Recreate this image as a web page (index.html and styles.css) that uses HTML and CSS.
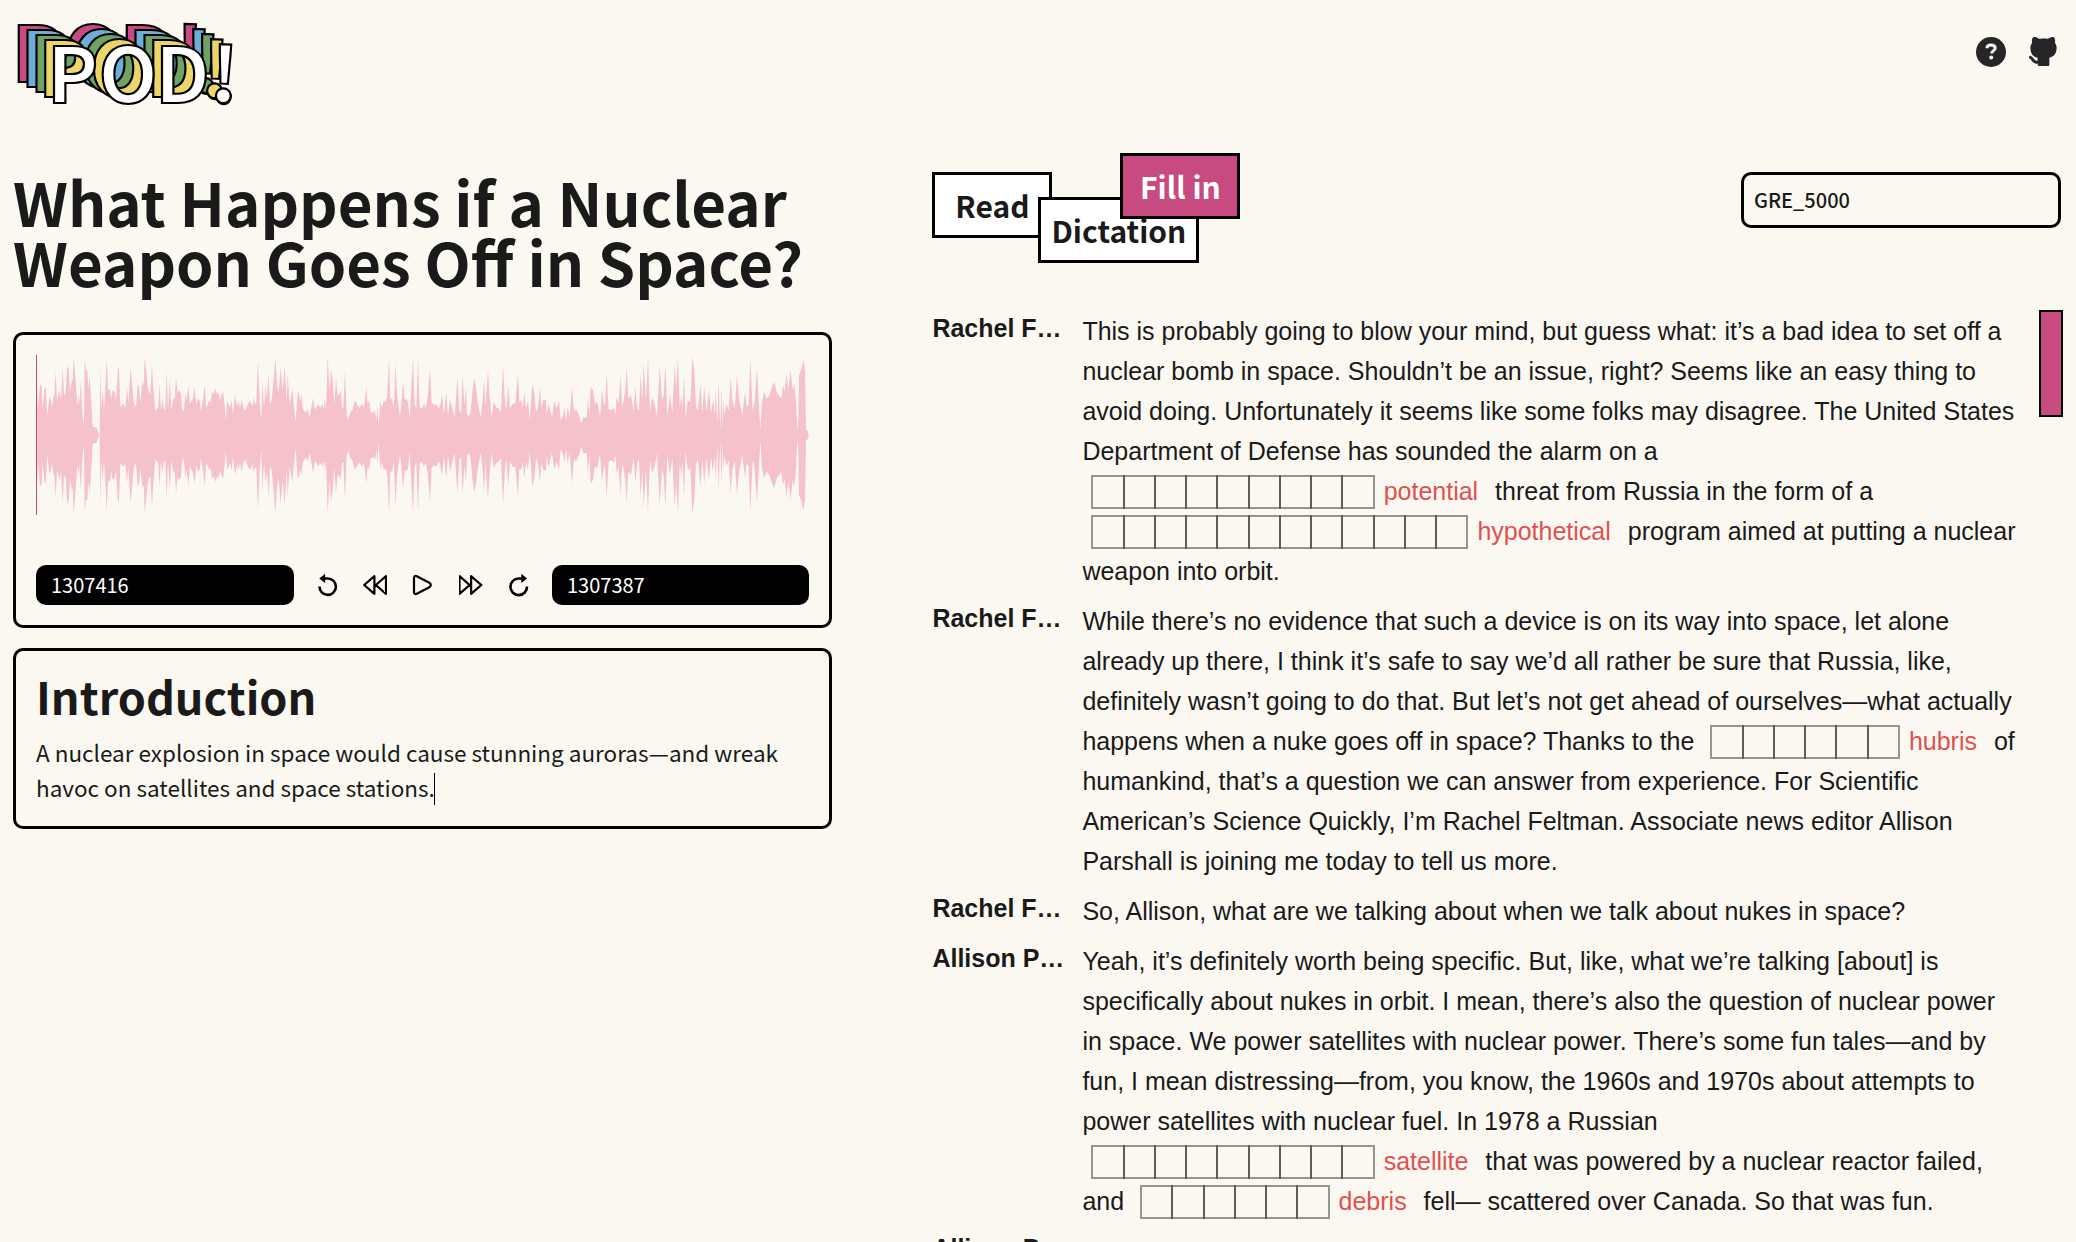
FILE: index.html
```html
<!DOCTYPE html>
<html lang="en">
<head>
<meta charset="utf-8">
<title>POD!</title>
<link rel="stylesheet" href="styles.css">
</head>
<body>
<header class="topbar">
  <svg class="logo" width="240" height="110" viewBox="0 0 240 110" aria-label="POD!">
    <defs>
      <g id="word">
        <text x="47" y="102.5">P</text>
        <text x="98.500" y="102.5">O</text>
        <text x="155" y="102.5">D</text>
        <text x="210" y="103" transform="rotate(2 223 80)">!</text>
        <circle cx="223.300" cy="95.800" r="7.400"/>
      </g>
    </defs>
    <use href="#word" x="-35.2" y="-20.4" fill="#c74a80"/>
    <use href="#word" x="-26.4" y="-15.3" fill="#6caed6"/>
    <use href="#word" x="-17.6" y="-10.2" fill="#6fa264"/>
    <use href="#word" x="-8.8" y="-5.1" fill="#ecd66a"/>
    <use href="#word" fill="#fff"/>
  </svg>
  <nav class="links">
    <svg width="30" height="30" viewBox="0 0 30 30"><circle cx="15" cy="15" r="15" fill="#262628"/><path d="M10.9 11.2c0-2 1.6-3.2 4-3.2s4.300 1.200 4.300 3.200c0 2.500-3.600 2.500-3.600 5.400" fill="none" stroke="#fbf8f1" stroke-width="2.900"/><circle cx="15.200" cy="20.600" r="2" fill="#fbf8f1"/></svg>
    <svg width="35" height="35" viewBox="0 0 24 24" fill="#262628"><path d="M5.315 2.1c.791 -.113 1.9 .145 3.333 .966l.272 .161l.16 .1l.397 -.083a13.3 13.3 0 0 1 4.59 -.08l.456 .08l.396 .083l.161 -.1c1.385 -.84 2.487 -1.17 3.322 -1.148l.164 .008l.147 .017l.076 .014l.05 .011l.144 .047a1 1 0 0 1 .53 .514a5.2 5.2 0 0 1 .397 2.91l-.047 .267l-.046 .196l.123 .163c.574 .795 .93 1.728 1.03 2.707l.023 .295l.007 .272c0 3.855 -1.659 5.883 -4.644 6.68l-.245 .061l-.132 .029l.014 .161l.008 .157l.004 .365l-.002 .213l-.003 3.834a1 1 0 0 1 -.883 .993l-.117 .007h-6a1 1 0 0 1 -.993 -.883l-.007 -.117v-.734c-1.818 .26 -3.03 -.424 -4.11 -1.878l-.535 -.766c-.28 -.396 -.455 -.579 -.589 -.644l-.048 -.019a1 1 0 0 1 .564 -1.918c.642 .188 1.074 .568 1.57 1.239l.538 .769c.76 1.079 1.36 1.459 2.609 1.191l.001 -.678l-.018 -.168a5.03 5.03 0 0 1 -.021 -.824l.017 -.185l.019 -.12l-.108 -.024c-2.976 -.71 -4.703 -2.573 -4.875 -6.139l-.01 -.31l-.004 -.292a5.6 5.6 0 0 1 .908 -3.051l.152 -.222l.122 -.163l-.045 -.196a5.2 5.2 0 0 1 .145 -2.642l.1 -.282l.106 -.253a1 1 0 0 1 .529 -.514l.144 -.047l.154 -.03z"/></svg>
  </nav>
</header>
<main class="layout">
  <section class="left">
    <h1>What Happens if a Nuclear Weapon Goes Off in Space?</h1>
    <div class="panel player">
      <svg class="wave" width="773" height="160" viewBox="108 104 2319 480">
        <defs><g id="half">
          <path d="M110 345L112 200 114 265 120 190 125 200 128 265 133 205 137 200 142 285 148 230 153 240 156 260 160 230 163 225 167 155 171 240 178 210 183 235 188 140 192 225 197 215 202 135 206 150 210 215 215 185 218 180 221 110 226 165 232 255 237 220 238 260 242 180 246 260 250 310 252 300 254 115 258 150 262 150 265 205 269 170 273 230 278 318 282 320 290 322 297 344 299 344 301 135 304 265 308 210 312 265 316 205 320 115 324 210 330 205 334 235 338 210 344 215 348 240 354 140 357 150 361 260 371 250 376 262 381 200 385 250 392 140 397 200 402 250 408 260 413 190 417 200 421 245 427 185 431 195 434 110 438 145 443 200 447 215 451 220 456 130 460 200 466 272 475 262 478 190 483 270 487 230 491 262 496 270 500 150 504 265 509 180 514 268 520 235 524 235 528 170 533 220 537 208 543 220 547 275 552 268 556 220 560 240 565 195 570 250 578 235 584 200 589 252 594 235 599 240 603 275 609 235 614 195 619 262 628 240 632 248 636 212 641 222 646 205 652 222 655 215 659 238 665 225 669 212 673 245 677 298 682 240 690 262 694 238 699 280 705 225 712 258 716 240 720 262 725 235 730 262 736 272 742 255 750 240 757 258 761 230 764 250 769 245 774 120 779 240 784 298 787 180 792 260 797 200 801 235 806 160 810 250 815 240 820 185 826 110 831 190 836 215 842 140 848 210 854 135 860 245 863 160 869 250 877 205 882 260 887 305 893 215 897 220 901 245 904 220 909 265 918 278 923 265 929 292 939 232 945 268 955 252 961 262 966 250 971 265 975 240 978 270 983 110 989 210 993 145 998 180 1003 250 1008 170 1012 220 1017 225 1022 210 1026 260 1030 265 1035 150 1040 285 1045 298 1051 275 1057 270 1065 240 1073 255 1079 262 1086 250 1092 262 1099 200 1103 250 1107 240 1112 275 1121 278 1125 270 1129 300 1132 260 1136 320 1141 240 1145 262 1152 240 1157 245 1162 225 1167 110 1171 240 1176 232 1181 265 1187 130 1191 220 1200 290 1204 250 1209 185 1214 240 1218 235 1224 245 1229 295 1233 220 1239 110 1244 250 1249 265 1254 115 1259 260 1261 262V345Z"/>
          <path transform="translate(1260 0)" d="M0 345L0 262 6 265 12 250 17 262 23 230 30 145 35 245 42 255 48 250 55 265 60 258 66 225 72 280 79 215 84 285 90 235 97 265 104 290 112 172 118 270 123 280 128 165 133 255 138 200 141 280 146 290 152 275 158 205 163 175 168 200 174 250 182 290 187 250 192 175 196 260 204 150 209 230 215 290 221 245 230 262 236 265 243 275 249 135 254 230 259 270 265 195 270 265 278 250 286 250 294 160 298 245 304 240 308 265 313 215 318 265 324 240 329 298 337 190 343 215 348 275 354 260 360 200 364 260 370 240 378 238 380 285 385 250 396 290 403 240 410 265 417 240 422 300 428 290 434 260 438 300 443 260 449 290 456 200 462 275 468 265 475 280 484 310 490 290 500 292 504 230 508 285 512 200 519 210 525 250 532 245 540 290 546 205 552 252 555 250 560 160 566 265 575 270 582 260 586 285 590 230 596 250 601 165 607 260 611 240 616 210 620 140 625 235 633 225 641 275 646 200 652 265 657 270 662 160 667 240 671 130 678 240 684 115 690 270 697 230 704 250 711 290 719 135 726 240 731 225 736 130 742 285 750 225 757 275 764 130 768 200 774 110 779 260 785 225 788 265 792 160 797 295 803 240 811 245 817 110 823 150 828 260 834 270 841 190 847 275 853 200 859 275 867 210 873 280 879 235 884 280 887 210 892 310 896 180 901 330 904 200 908 320 910 240 914 285 919 250 926 270 932 170 937 240 944 265 951 165 957 235 967 285 975 215 980 260 986 250 991 115 998 270 1003 250 1011 145 1017 255 1021 325 1026 245 1032 215 1040 235 1048 225 1056 200 1063 185 1070 215 1077 225 1084 235 1089 195 1094 215 1099 160 1105 205 1112 150 1118 210 1123 190 1128 245 1132 330 1135 300 1137 165 1143 150 1150 118 1155 150 1158 330 1161 328 1166 344V345Z"/>
        </g></defs>
        <g fill="#f5c2cb"><use href="#half"/><use href="#half" transform="translate(0 689) scale(1 -1)"/></g>
        <rect x="108" y="104" width="3" height="480" fill="#c74a80"/>
      </svg>
      <div class="controls">
        <div class="pill">1307416</div>
        <div class="buttons">
          <svg width="24" height="24" viewBox="0 0 24 24"><path d="M3.500 13.500a8.200 8.200 0 1 0 8.200-8H6.300" fill="none" stroke="#000" stroke-width="2.600"/><path d="M9.100.8v9.200L3.300 5.500z"/></svg>
          <svg width="24" height="24" viewBox="0 0 24 24" class="line"><path d="M11.400 3.200v17.600L1.200 12zM23 3.200v17.600L12.800 12z"/></svg>
          <svg width="24" height="24" viewBox="0 0 24 24" class="line"><path d="M3 5c0-1.800 1.200-2.500 2.800-1.700l12.500 6.500c2 1.200 2 3.200 0 4.400L5.800 20.700c-1.600.8-2.800.1-2.800-1.700z"/></svg>
          <svg width="24" height="24" viewBox="0 0 24 24" class="line"><path d="M.5 3.200v17.600L10.700 12zM12.100 3.200v17.600L22.300 12z"/></svg>
          <svg width="24" height="24" viewBox="0 0 24 24"><path d="M21 13.500a8.300 8.300 0 1 1-8.200-8h5" fill="none" stroke="#000" stroke-width="2.600"/><path d="M15.300.8v9.200l5.800-4.500z"/></svg>
        </div>
        <div class="pill end">1307387</div>
      </div>
    </div>
    <div class="panel intro">
      <h2>Introduction</h2>
      <p>A nuclear explosion in space would cause stunning auroras—and wreak<br>havoc on satellites and space stations.<span class="caret"></span></p>
    </div>
  </section>
  <section class="right">
    <div class="tools">
      <div class="tabs">
        <div class="tab read">Read</div>
        <div class="tab dictation">Dictation</div>
        <div class="tab fill">Fill in</div>
      </div>
      <div class="book">GRE_5000</div>
    </div>
    <div class="script">
      <div class="lines">
        <div class="row"><div class="who">Rachel Feltman</div><div class="said">This is probably going to blow your mind, but guess what: it’s a bad idea to set off a<br>nuclear bomb in space. Shouldn’t be an issue, right? Seems like an easy thing to<br>avoid doing. Unfortunately it seems like some folks may disagree. The United States<br>Department of Defense has sounded the alarm on a<br><span class="blank"><i></i><i></i><i></i><i></i><i></i><i></i><i></i><i></i><i></i></span><b class="word">potential</b> threat from Russia in the form of a<br><span class="blank"><i></i><i></i><i></i><i></i><i></i><i></i><i></i><i></i><i></i><i></i><i></i><i></i></span><b class="word">hypothetical</b> program aimed at putting a nuclear<br>weapon into orbit.</div></div>
        <div class="row"><div class="who">Rachel Feltman</div><div class="said">While there’s no evidence that such a device is on its way into space, let alone<br>already up there, I think it’s safe to say we’d all rather be sure that Russia, like,<br>definitely wasn’t going to do that. But let’s not get ahead of ourselves—what actually<br>happens when a nuke goes off in space? Thanks to the <span class="blank"><i></i><i></i><i></i><i></i><i></i><i></i></span><b class="word">hubris</b> of<br>humankind, that’s a question we can answer from experience. For Scientific<br>American’s Science Quickly, I’m Rachel Feltman. Associate news editor Allison<br>Parshall is joining me today to tell us more.</div></div>
        <div class="row"><div class="who">Rachel Feltman</div><div class="said">So, Allison, what are we talking about when we talk about nukes in space?</div></div>
        <div class="row"><div class="who">Allison Parshall</div><div class="said">Yeah, it’s definitely worth being specific. But, like, what we’re talking [about] is<br>specifically about nukes in orbit. I mean, there’s also the question of nuclear power<br>in space. We power satellites with nuclear power. There’s some fun tales—and by<br>fun, I mean distressing—from, you know, the 1960s and 1970s about attempts to<br>power satellites with nuclear fuel. In 1978 a Russian<br><span class="blank"><i></i><i></i><i></i><i></i><i></i><i></i><i></i><i></i><i></i></span><b class="word">satellite</b> that was powered by a nuclear reactor failed,<br>and <span class="blank"><i></i><i></i><i></i><i></i><i></i><i></i></span><b class="word">debris</b> fell— scattered over Canada. So that was fun.</div></div>
        <div class="row"><div class="who">Allison Parshall</div><div class="said"></div></div>
      </div>
      <div class="thumb"></div>
    </div>
  </section>
</main>
</body>
</html>
```

FILE: styles.css
```css
* { box-sizing: border-box; }
body {
  margin: 0;
  height: 1242px;
  overflow: hidden;
  background: #fbf8f1;
  color: #1a1a1a;
  font-family: "Noto Sans CJK SC", sans-serif;
}
.topbar {
  height: 152px;
  display: flex;
  justify-content: space-between;
  align-items: flex-start;
}
.logo {
  font-weight: 700;
  font-size: 77px;
  stroke: #000;
  stroke-width: 2.2;
}
.links { display: flex; align-items: center; gap: 20px; padding: 34px 15px 0 0; }
.layout {
  display: grid;
  grid-template-columns: 819px 1130.6px;
  column-gap: 100.4px;
  padding-left: 13px;
}
h1 { height: 120px; margin: 19px 0 41px; font-size: 60px; line-height: 60px; font-weight: 700; }
.panel { border: 3px solid #000; border-radius: 10px; padding: 20px; }
.player { height: 296px; display: flex; flex-direction: column; justify-content: space-between; }
.wave { display: block; }
.controls { display: flex; align-items: center; }
.pill {
  width: 258px;
  height: 40px;
  padding-left: 15px;
  border-radius: 10px;
  background: #000;
  color: #fff;
  font-size: 20px;
  line-height: 40px;
}
.pill.end { width: 257px; }
.buttons { flex: 1; display: flex; justify-content: center; gap: 23.7px; }
.line { fill: none; stroke: #000; stroke-width: 2.200; stroke-linejoin: round; }
.intro { height: 181px; margin-top: 20px; }
h2 { margin: -3px 0 0; font-size: 45px; line-height: 55px; font-weight: 700; }
.intro p { margin: 12px 0 0; font-size: 22.5px; line-height: 35px; white-space: nowrap; }
.caret { display: inline-block; width: 1px; height: 32px; margin-left: -1px; background: #000; vertical-align: -8px; }
.tools { display: flex; justify-content: space-between; height: 158px; padding: 1px 2px 0 0; }
.tabs { display: flex; align-items: flex-start; }
.tab {
  height: 66px;
  border: 3px solid #000;
  background: #fff;
  font-size: 30px;
  line-height: 60px;
  font-weight: 700;
  text-align: center;
}
.read { width: 120px; margin-top: 19px; }
.dictation { width: 161px; margin: 44px 0 0 -14px; }
.fill { width: 120px; margin-left: -79px; background: #c74a80; color: #fff; }
.book {
  width: 320px;
  height: 56px;
  margin: 19px 0 0;
  padding-left: 10px;
  border: 3px solid #000;
  border-radius: 10px;
  font-size: 20px;
  line-height: 50px;
  font-weight: 500;
}
.script { display: flex; justify-content: space-between; font-family: "Liberation Sans", sans-serif; }
.lines { padding-top: 1px; }
.row { display: flex; margin-bottom: 10px; min-height: 40px; }
.who {
  width: 133px;
  margin: -3px 17px 0 0;
  overflow: hidden;
  text-overflow: ellipsis;
  white-space: nowrap;
  font-size: 25px;
  line-height: 40px;
  font-weight: 700;
}
.said { font-size: 25px; line-height: 40px; white-space: nowrap; }
.blank { display: inline-flex; margin: 0 11px 0 9px; height: 34px; vertical-align: -9px; }
.blank i { flex: none; width: 33.25px; margin-right: -2px; border: 2px solid rgba(26, 26, 26, 0.45); }
.word { font-weight: 400; color: #e05050; margin-right: 10px; }
.thumb { width: 24px; height: 107px; border: 2px solid #000; background: #c74a80; }
```
